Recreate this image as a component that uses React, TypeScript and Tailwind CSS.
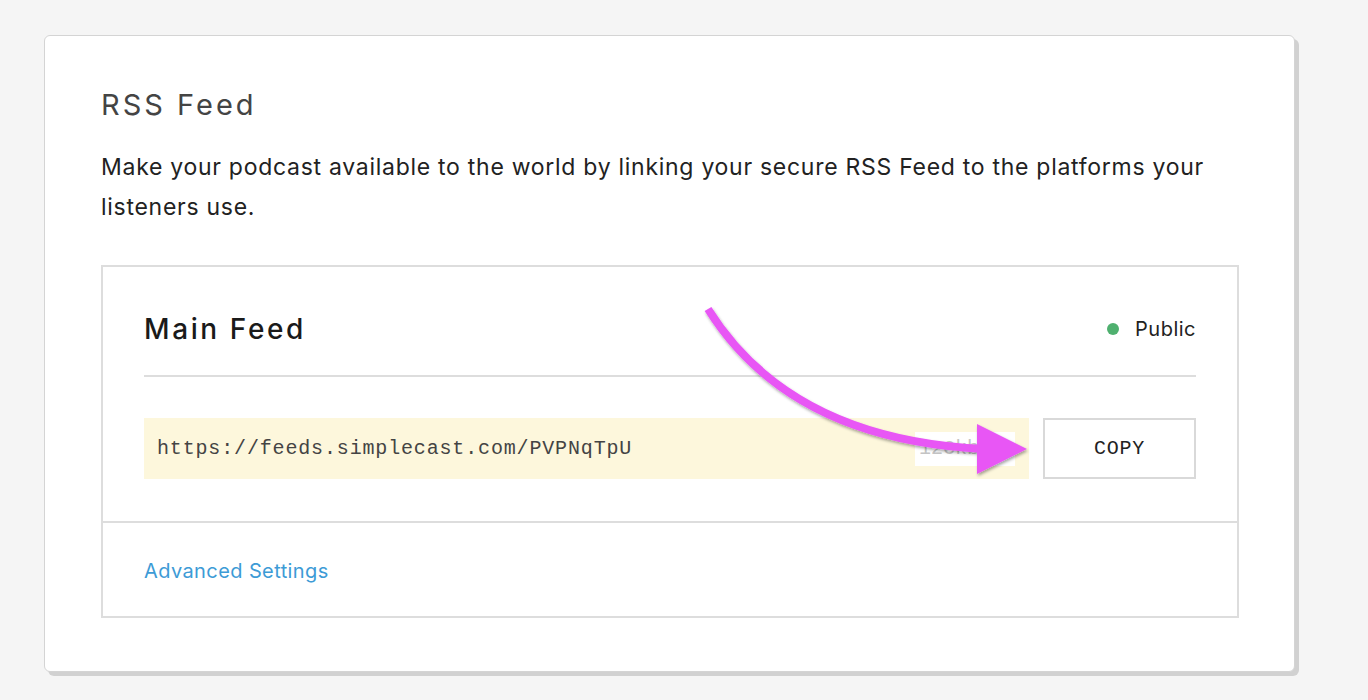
import React from "react";

const sans = "font-['Inter','Liberation_Sans',sans-serif]";
const mono = "font-['Liberation_Mono','DejaVu_Sans_Mono',monospace]";

const Arrow = () => (
  <svg
    className="pointer-events-none absolute left-0 top-0"
    width="1368"
    height="700"
    viewBox="0 0 1368 700"
  >
    <defs>
      <filter id="arrow-shadow" x="-10%" y="-10%" width="120%" height="120%">
        <feDropShadow dx="1" dy="2" stdDeviation="1.5" floodColor="#000" floodOpacity="0.35" />
      </filter>
    </defs>
    <g filter="url(#arrow-shadow)">
      <path
        d="M708 309 Q790 440 985 449"
        fill="none"
        stroke="#e856f5"
        strokeWidth="8"
      />
      <polygon points="977,424 1027,449 977,474" fill="#e856f5" />
    </g>
  </svg>
);

const App = () => {
  return (
    <div className={`relative min-h-[700px] w-full bg-[#f5f5f5] pt-[35px] pl-[44px] ${sans}`}>
      <section className="w-[1251px] rounded-[6px] border border-[#d4d4d4] bg-white pl-[56px] pr-[55px] pt-[52px] pb-[53px] shadow-[4px_4px_0_#d1d1d1]">
        <h2 className="text-[29px] leading-[34px] font-normal tracking-[3px] text-[#444]">RSS Feed</h2>
        <p className="mt-[25px] text-[23px] leading-[40px] tracking-[0.72px] text-[#222]">
          Make your podcast available to the world by linking your secure RSS Feed to the platforms your
          listeners use.
        </p>

        <div className="mt-[38px] border-2 border-[#dddddd]">
          <div className="px-[41px] pt-[48px]">
            <div className="flex items-center justify-between border-b-2 border-[#dddddd] pb-[32px]">
              <h3 className="text-[28px] leading-[28px] font-medium tracking-[2.6px] text-[#1a1a1a]">Main Feed</h3>
              <div className="flex items-center gap-[16px] text-[20px] leading-[28px] tracking-[0.5px] text-[#222]">
                <span className="h-[12px] w-[12px] rounded-full bg-[#4fb06f]" />
                Public
              </div>
            </div>

            <div className="flex gap-[14px] pt-[41px] pb-[42px]">
              <div className="flex h-[61px] flex-1 items-center justify-between bg-[#fdf7dc] pl-[13px] pr-[14px]">
                <span className={`${mono} text-[20px] tracking-[0.84px] text-[#444]`}>
                  https://feeds.simplecast.com/PVPNqTpU
                </span>
                <span className={`${mono} flex h-[34px] w-[100px] items-center bg-white pl-[4px] text-[20px] text-[#c4c4c4]`}>
                  12Ckb
                </span>
              </div>
              <button className={`${mono} h-[61px] w-[153px] border-2 border-[#d9d9d9] bg-white text-[20px] tracking-[0.8px] text-[#222]`}>
                COPY
              </button>
            </div>
          </div>

          <div className="border-t-2 border-[#dddddd] px-[41px] pt-[34px] pb-[31px]">
            <a className="text-[20px] leading-[28px] tracking-[0.4px] text-[#3d9bd6]">Advanced Settings</a>
          </div>
        </div>
      </section>
      <Arrow />
    </div>
  );
};

export default App;
